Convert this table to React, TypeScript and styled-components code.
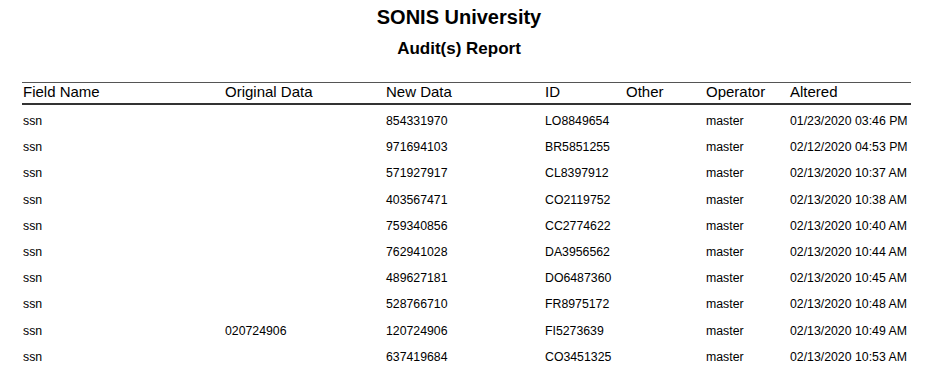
import React from 'react';
import styled, { createGlobalStyle } from 'styled-components';

const GlobalStyle = createGlobalStyle`
  body {
    margin: 0;
    background: #ffffff;
    color: #000000;
    font-family: "Liberation Sans", Arial, sans-serif;
  }
`;

const Page = styled.div`
  padding: 6px 0 0 8px;
`;

const ReportHeader = styled.div`
  width: 902px;
  text-align: center;
`;

const Title = styled.h1`
  margin: 0;
  font-size: 20px;
  line-height: 23px;
  font-weight: 700;
`;

const SubTitle = styled.h2`
  margin: 10px 0 0;
  font-size: 17px;
  line-height: 20px;
  font-weight: 700;
`;

const Table = styled.div`
  margin: 23px 0 0 14px;
  width: 889px;
`;

const Row = styled.div<{ $head?: boolean }>`
  display: grid;
  grid-template-columns: 202px 161px 159px 81px 80px 84px 1fr;
  font-size: ${(p) => (p.$head ? '15px' : '12.3px')};
  line-height: ${(p) => (p.$head ? '17px' : '16px')};
  padding: ${(p) => (p.$head ? '0 0 3px' : '8px 0 2.2px')};
  border-top: ${(p) => (p.$head ? '1px solid #555555' : 'none')};
  border-bottom: ${(p) => (p.$head ? '2px solid #333333' : 'none')};
`;

const Cell = styled.div`
  padding-left: 1px;
  white-space: nowrap;
`;

const columns = ['Field Name', 'Original Data', 'New Data', 'ID', 'Other', 'Operator', 'Altered'];

const rows = [
  ['ssn', '', '854331970', 'LO8849654', '', 'master', '01/23/2020 03:46 PM'],
  ['ssn', '', '971694103', 'BR5851255', '', 'master', '02/12/2020 04:53 PM'],
  ['ssn', '', '571927917', 'CL8397912', '', 'master', '02/13/2020 10:37 AM'],
  ['ssn', '', '403567471', 'CO2119752', '', 'master', '02/13/2020 10:38 AM'],
  ['ssn', '', '759340856', 'CC2774622', '', 'master', '02/13/2020 10:40 AM'],
  ['ssn', '', '762941028', 'DA3956562', '', 'master', '02/13/2020 10:44 AM'],
  ['ssn', '', '489627181', 'DO6487360', '', 'master', '02/13/2020 10:45 AM'],
  ['ssn', '', '528766710', 'FR8975172', '', 'master', '02/13/2020 10:48 AM'],
  ['ssn', '020724906', '120724906', 'FI5273639', '', 'master', '02/13/2020 10:49 AM'],
  ['ssn', '', '637419684', 'CO3451325', '', 'master', '02/13/2020 10:53 AM'],
];

const App: React.FC = () => {
  return (
    <Page>
      <GlobalStyle />
      <ReportHeader>
        <Title>SONIS University</Title>
        <SubTitle>Audit(s) Report</SubTitle>
      </ReportHeader>
      <Table>
        <Row $head>
          {columns.map((c) => (
            <Cell key={c}>{c}</Cell>
          ))}
        </Row>
        {rows.map((r, i) => (
          <Row key={i}>
            {r.map((v, j) => (
              <Cell key={j}>{v}</Cell>
            ))}
          </Row>
        ))}
      </Table>
    </Page>
  );
};

export default App;
